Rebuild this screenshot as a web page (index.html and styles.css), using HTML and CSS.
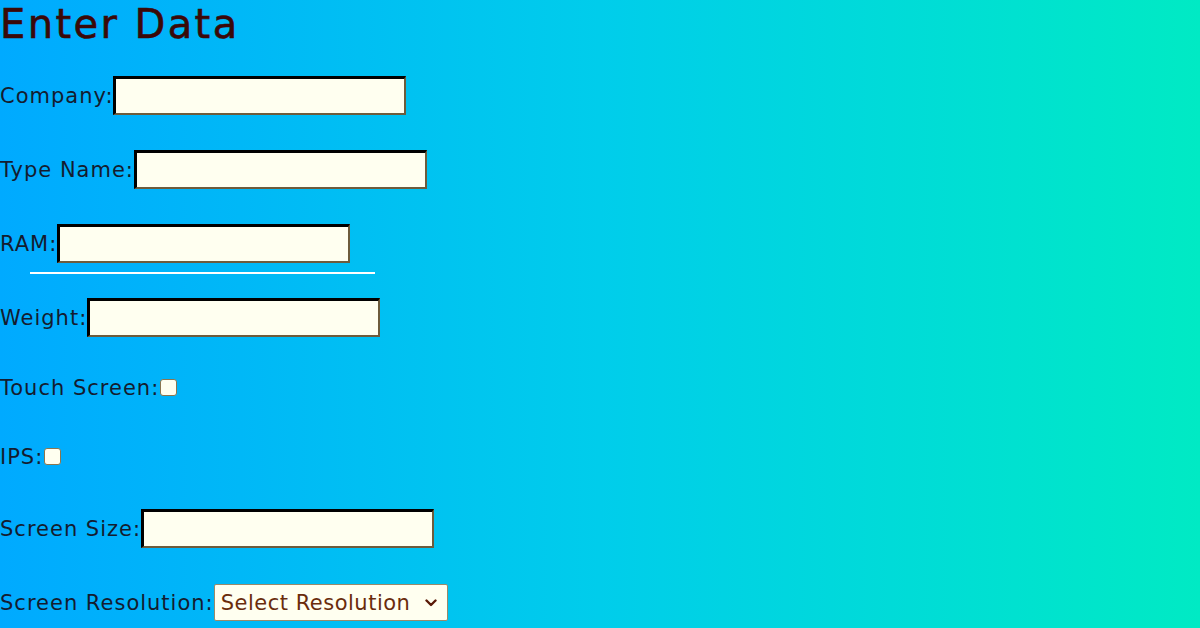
FILE: index.html
```html
<!DOCTYPE html>
<html lang="en">
<head>
<meta charset="utf-8">
<title>Enter Data</title>
<link rel="stylesheet" href="styles.css">
</head>
<body>
<main class="page">
  <h1 class="title">Enter Data</h1>
  <form class="form">
    <div class="row"><label class="label" for="company">Company:</label><input class="field" id="company" type="text"></div>
    <div class="row"><label class="label" for="typename">Type Name:</label><input class="field" id="typename" type="text"></div>
    <div class="row"><label class="label" for="ram">RAM:</label><input class="field" id="ram" type="text"></div>
    <hr class="divider">
    <div class="row row-after-divider"><label class="label" for="weight">Weight:</label><input class="field" id="weight" type="text"></div>
    <div class="row row-check"><label class="label" for="touch">Touch Screen:</label><input class="check" id="touch" type="checkbox"></div>
    <div class="row row-check"><label class="label" for="ips">IPS:</label><input class="check" id="ips" type="checkbox"></div>
    <div class="row"><label class="label" for="size">Screen Size:</label><input class="field" id="size" type="text"></div>
    <div class="row row-select"><label class="label" for="res">Screen Resolution:</label>
      <div class="select-wrap">
        <select class="select" id="res"><option>Select Resolution</option></select>
        <svg class="chev" viewBox="0 0 12 8" width="12" height="8" aria-hidden="true"><path d="M1.5 1.5 L6 6 L10.5 1.5" fill="none" stroke="#5a1a08" stroke-width="2.4" stroke-linecap="round" stroke-linejoin="round"/></svg>
      </div>
    </div>
  </form>
</main>
</body>
</html>
```

FILE: styles.css
```css
html, body {
  margin: 0;
  padding: 0;
  height: 100%;
}

body {
  background: linear-gradient(to right, #00aaff 0%, #00cdeb 50%, #00eac4 100%);
  font-family: "DejaVu Sans", "Open Sans", sans-serif;
  overflow: hidden;
}

.page {
  display: flex;
  flex-direction: column;
}

.title {
  margin: 0;
  font-size: 40px;
  line-height: 48px;
  font-weight: 400;
  letter-spacing: 2.4px;
  color: #3a0808;
  -webkit-text-stroke: 0.6px #3a0808;
}

.form {
  display: flex;
  flex-direction: column;
  margin-top: 28px;
}

.row {
  display: flex;
  align-items: center;
  height: 39px;
  margin-top: 35px;
}

.row:first-child {
  margin-top: 0;
}

.row-after-divider {
  margin-top: 24px;
}

.row-check {
  margin-top: 31px;
}

.row-check + .row-check {
  margin-top: 30px;
}

.row-check + .row:not(.row-check) {
  margin-top: 33px;
}

.row-select {
  height: 37px;
  margin-top: 36px;
}

.label {
  font-size: 21px;
  letter-spacing: 1px;
  color: #141c30;
  white-space: nowrap;
}

.field {
  box-sizing: border-box;
  width: 293px;
  height: 39px;
  margin: 0;
  padding: 2px 6px;
  background: #fffff0;
  border-style: solid;
  border-width: 3px 2px 2px 3px;
  border-color: #000 #6e5c3c #6e5c3c #000;
  border-radius: 0;
  font-family: inherit;
  font-size: 18px;
}

.divider {
  width: 345px;
  height: 2px;
  margin: 9px 0 0 30px;
  border: 0;
  background: #ffffff;
}

.check {
  appearance: none;
  -webkit-appearance: none;
  box-sizing: border-box;
  width: 17px;
  height: 17px;
  margin: 0 0 0 1px;
  background: #fffff0;
  border: 1px solid #8a7650;
  border-radius: 3px;
}

.select-wrap {
  position: relative;
  display: flex;
}

.select {
  appearance: none;
  -webkit-appearance: none;
  box-sizing: border-box;
  width: 234px;
  height: 37px;
  margin: 0;
  padding: 0 30px 0 6px;
  background: #fffff0;
  border: 1px solid #9a8a6a;
  border-radius: 2px;
  font-family: inherit;
  font-size: 21px;
  letter-spacing: 0.5px;
  color: #6a2c0c;
}

.chev {
  position: absolute;
  right: 11px;
  top: 15px;
  pointer-events: none;
}
```
